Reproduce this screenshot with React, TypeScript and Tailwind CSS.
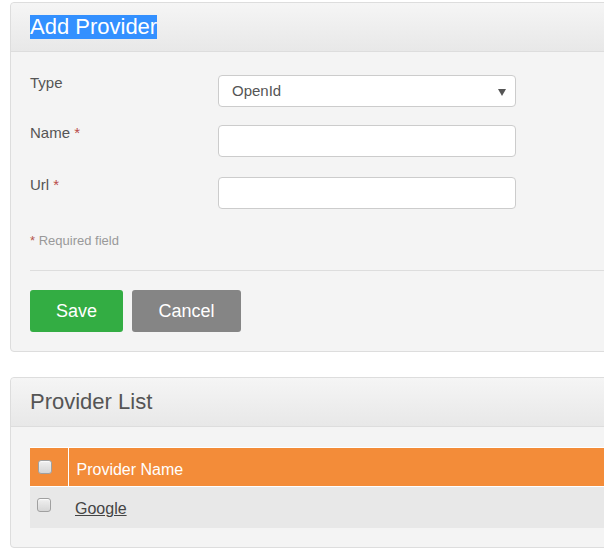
import React from "react";

const Checkbox = () => (
  <span className="block w-[14px] h-[14px] rounded-[3px] border border-[#a0a0a0] bg-gradient-to-b from-[#f0f0f0] to-[#d6d6d6] shadow-[inset_0_1px_1px_rgba(255,255,255,0.8)]" />
);

const FormRow = ({
  label,
  required,
  children,
  className,
}: {
  label: string;
  required?: boolean;
  children: React.ReactNode;
  className?: string;
}) => (
  <div className={`flex ${className ?? ""}`}>
    <div className="w-[188px] text-[15px] leading-[16px] text-[#555]">
      {label}
      {required && <span className="text-[#b94a48]"> *</span>}
    </div>
    {children}
  </div>
);

const App = () => {
  return (
    <div className="w-[604px] h-[560px] overflow-hidden bg-white pt-[2px] pl-[10px] font-['Liberation_Sans',Arial,sans-serif]">
      {/* Add provider panel */}
      <div className="w-[640px] rounded-[4px] border border-[#dddddd] bg-[#f4f4f4]">
        <div className="h-[49px] pt-[12px] px-[19px] border-b border-[#dddddd] rounded-t-[4px] bg-gradient-to-b from-[#f5f5f5] to-[#e8e8e8]">
          <span className="inline-block bg-[#3390ff] text-white text-[22px] leading-[24px]">
            Add Provider
          </span>
        </div>
        <div className="pl-[19px] pt-[23px] pb-[19px]">
          <FormRow label="Type" className="mb-[18px]">
            <div className="relative w-[298px] h-[32px] rounded-[4px] border border-[#cccccc] bg-white pl-[13px] text-[15px] leading-[30px] text-[#555]">
              OpenId
              <span className="absolute right-[9px] top-[13px] w-0 h-0 border-l-[4px] border-r-[4px] border-t-[7px] border-l-transparent border-r-transparent border-t-[#555]" />
            </div>
          </FormRow>
          <FormRow label="Name" required className="mb-[20px]">
            <div className="w-[298px] h-[32px] rounded-[4px] border border-[#cccccc] bg-white" />
          </FormRow>
          <FormRow label="Url" required>
            <div className="w-[298px] h-[32px] rounded-[4px] border border-[#cccccc] bg-white" />
          </FormRow>
          <div className="mt-[24px] text-[13px] leading-[16px] text-[#999]">
            <span className="text-[#b5574e]">*</span> Required field
          </div>
          <div className="mt-[21px] border-t border-[#dddddd]" />
          <div className="mt-[19px] flex gap-[9px]">
            <button className="w-[93px] h-[42px] rounded-[3px] bg-[#33ad43] text-white text-[18px]">
              Save
            </button>
            <button className="w-[109px] h-[42px] rounded-[3px] bg-[#858585] text-white text-[18px]">
              Cancel
            </button>
          </div>
        </div>
      </div>

      {/* Provider list panel */}
      <div className="mt-[25px] w-[640px] rounded-[4px] border border-[#dddddd] bg-[#f4f4f4]">
        <div className="h-[49px] pt-[12px] px-[19px] border-b border-[#dddddd] rounded-t-[4px] bg-gradient-to-b from-[#f5f5f5] to-[#e8e8e8]">
          <span className="inline-block text-[#555] text-[22px] leading-[24px]">
            Provider List
          </span>
        </div>
        <div className="pl-[19px] pt-[20px] pb-[19px]">
          <table className="w-[600px] border-collapse">
            <thead>
              <tr className="bg-[#f38c39] border-y border-white">
                <th className="w-[38px] h-[39px] border-r border-white pl-[8px] text-left align-middle">
                  <Checkbox />
                </th>
                <th className="pl-[8px] text-left font-normal text-white text-[16px] leading-[18px] pt-[6px]">
                  Provider Name
                </th>
              </tr>
            </thead>
            <tbody>
              <tr className="bg-[#e8e8e8]">
                <td className="h-[41px] pl-[7px] align-middle pb-[5px]">
                  <Checkbox />
                </td>
                <td className="pl-[7px] text-[16px] leading-[18px] pt-[3px]">
                  <a href="#" className="text-[#444] underline">
                    Google
                  </a>
                </td>
              </tr>
            </tbody>
          </table>
        </div>
      </div>
    </div>
  );
};

export default App;
